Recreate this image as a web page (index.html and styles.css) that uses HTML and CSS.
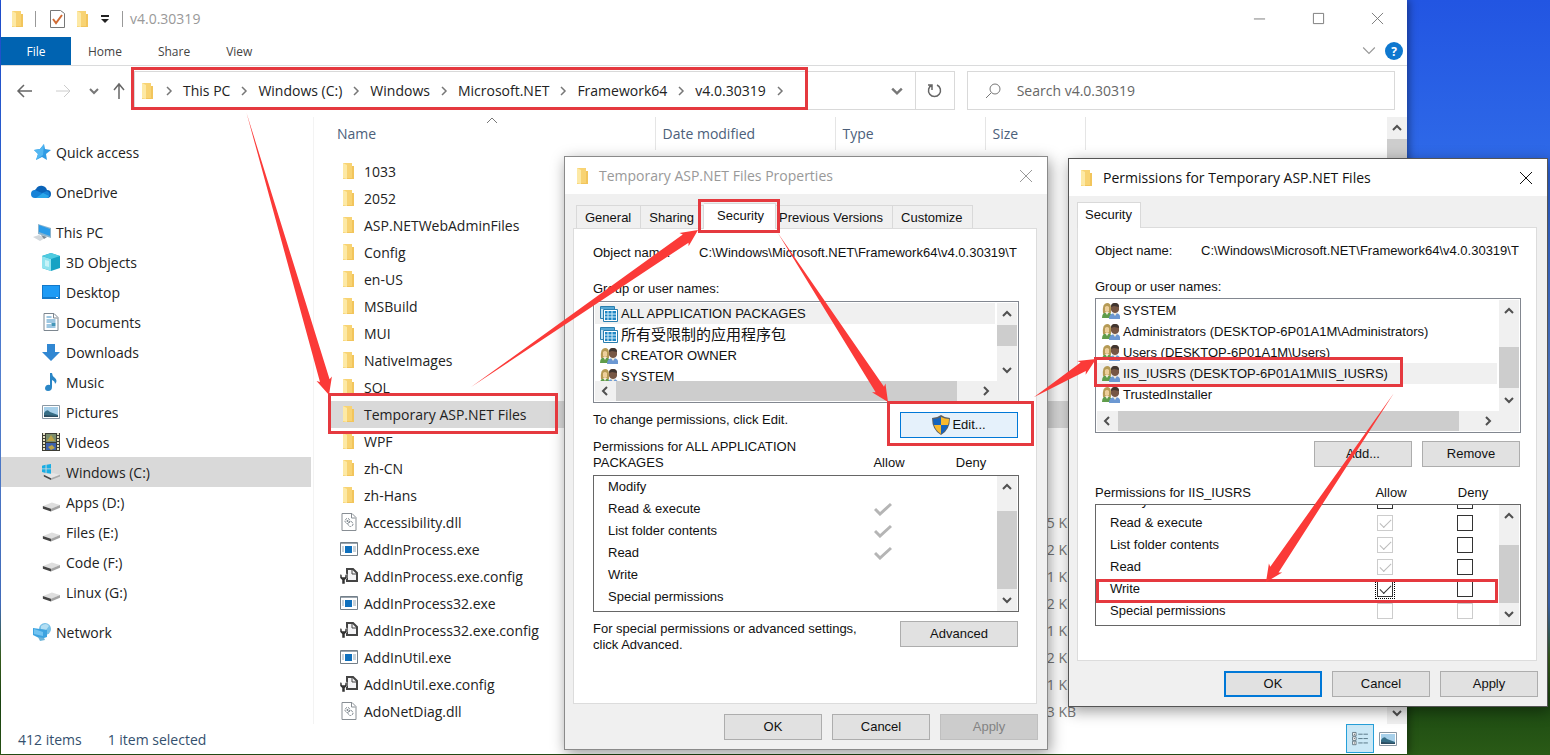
FILE: index.html
```html
<!DOCTYPE html>
<html lang="en"><head><meta charset="utf-8"><title>v4.0.30319</title><link rel="stylesheet" href="styles.css"></head>
<body class="desktop">
<svg class="sprite" aria-hidden="true">
<symbol id="folder" viewBox="0 0 16 18"><path d="M2 1h9v3h2v13H2z" fill="#f8d373"/><path d="M2 1l4 2v14l-4-1z" fill="#fde9a5"/><path d="M11 4h2v13H6v-1h5z" fill="#f2c55c"/></symbol>
<symbol id="star" viewBox="0 0 18 18"><path d="M11 1l1 5 6 1-5 4 1 6-5-3-6 3 2-6-4-4 6-1z" fill="#2f9be4"/><path d="M1 7l6-1 4-5-1 11-7 5 2-6z" fill="#53b7f2"/></symbol>
<symbol id="cloud" viewBox="0 0 20 14"><path d="M5 13a5 5 0 0 1 0-9 6 6 0 0 1 11 1 4 4 0 0 1 0 8z" fill="#0a63b8"/><path d="M4 13a4 4 0 0 1 0-8l7 3 5-2a4 4 0 0 1 1 7z" fill="#1683d8"/><path d="M5 13l7-5 6 3q-1 2-3 2z" fill="#2aa7ea"/></symbol>
<symbol id="pc" viewBox="0 0 18 18"><path d="M5 1l13 4v10L5 11z" fill="#8ab4cf"/><path d="M6 2l11 4v7L6 9z" fill="#2a9be8"/><path d="M0 14l6-2 6 3-5 3z" fill="#d3d8dc"/><path d="M8 12l6 2-3 2z" fill="#7b8a96"/></symbol>
<symbol id="cube" viewBox="0 0 18 18"><path d="M9 0l9 3v12l-9 3-9-3V3z" fill="#16a2c4"/><path d="M0 3l9 3v12l-9-3z" fill="#8fe3ef"/><path d="M9 0l9 3-9 3-9-3z" fill="#4fcbe0"/><path d="M3 7l4 1v6l-4-1z" fill="#c7f3f8"/></symbol>
<symbol id="screen" viewBox="0 0 18 14"><path d="M0 0h18v14H0z" fill="#1379ca"/><path d="M1 1h16v11H1z" fill="#1e9bf5"/><path d="M14 12h2v1h-2z" fill="#fff"/></symbol>
<symbol id="doc" viewBox="0 0 15 18"><path d="M.5.5h10l4 4v13H.5z" fill="#fff" stroke="#7d8790"/><path d="M10 1v4h4" fill="none" stroke="#7d8790"/><path d="M3 4h5M3 7h9M3 9h9M3 12h5M3 14h9" stroke="#3d8fc4"/><path d="M8 10h4v3H8z" fill="#4596b8"/></symbol>
<symbol id="down" viewBox="0 0 18 18"><path d="M5 1h8v8h5l-9 9-9-9h5z" fill="#3187d2"/></symbol>
<symbol id="note" viewBox="0 0 14 18"><path d="M6 0h2q0 3 3 5 3 3 0 6 0-3-3-4v7q0 4-4 4-3 0-3-3 1-4 5-3z" fill="#2a86c6"/></symbol>
<symbol id="photo" viewBox="0 0 18 14"><path d="M.5.5h17v13H.5z" fill="#fff" stroke="#8a98a4"/><path d="M2 2h14v10H2z" fill="#a7d0ea"/><path d="M2 8q3-5 6-1l8 3v2H2z" fill="#376e86"/><path d="M2 10l14 1v1H2z" fill="#2c4c60"/></symbol>
<symbol id="film" viewBox="0 0 18 18"><path d="M0 0h18v18H0z" fill="#3c3c34"/><path d="M2 0v18M16 0v18" stroke="#e6e3c7" stroke-width="2" stroke-dasharray="2 1"/><path d="M4 1h10v8H4z" fill="#7b8d6c"/><path d="M4 10h10v7H4z" fill="#3f62ad"/><path d="M9 2l4 6H5zM6 14l4-2 3 3-4 2z" fill="#bca445"/></symbol>
<symbol id="drive" viewBox="0 0 20 12"><path d="M1 6l10-4 9 3-10 4z" fill="#dedede"/><path d="M1 6l9 3v3L1 9z" fill="#444"/><path d="M10 9l10-4v3l-10 4z" fill="#a3a3a3"/></symbol>
<symbol id="windrive" viewBox="0 0 20 18"><path d="M2 12l10-2 8 2-10 4z" fill="#e6e6e6"/><path d="M2 12l8 4v2l-8-4z" fill="#444"/><path d="M10 16l10-4v2l-10 4z" fill="#aaa"/><path d="M0 2l4-1v4H0zM5 1l5-1v5H5zM0 6h4v4l-4-1zM5 6h5v5l-5-1z" fill="#18ade4"/></symbol>
<symbol id="network" viewBox="0 0 18 18"><circle cx="12" cy="6" r="6" fill="#75bfe6"/><path d="M8 3q5-4 8 0l-3 4-5-1z" fill="#b3def2"/><path d="M0 5l14 2v7l-6 2-8-4z" fill="#3da3e0"/><path d="M1 6l9 3v4L1 11z" fill="#71c3f1"/><path d="M5 14l6 1 1 2-5 1z" fill="#6db4d8"/></symbol>
<symbol id="dll" viewBox="0 0 15 18"><path d="M.5.5h10l4 4v13H.5z" fill="#fff" stroke="#888e94"/><path d="M10 1v4h4" fill="none" stroke="#888e94"/><circle cx="6" cy="8" r="2.500" fill="none" stroke="#7c858c" stroke-dasharray="2 1"/><circle cx="6" cy="8" r="1" fill="#7c858c"/><circle cx="9" cy="11" r="2.500" fill="none" stroke="#7c858c" stroke-dasharray="2 1"/></symbol>
<symbol id="exe" viewBox="0 0 18 14"><path d="M.5.5h17v13H.5z" fill="#fff" stroke="#737f89"/><path d="M1 1h16v1H1z" fill="#9ba5ae"/><path d="M5 4h7v7H5z" fill="#0f70bd"/><path d="M2 5h2M2 7h2M2 9h2M13 5h3M13 7h3M13 9h3" stroke="#92a6b4"/></symbol>
<symbol id="config" viewBox="0 0 18 18"><path d="M7 14V2h6l4 4v8z" fill="#f4f4f6" stroke="#444" stroke-width="2"/><path d="M12 2v5h5" fill="none" stroke="#444"/><path d="M0 7v4l2 2v4h3v-4l2-2V7l-2 1v2H2V8z" fill="#333" stroke="#fff" stroke-width=".5"/></symbol>
<symbol id="people" viewBox="0 0 18 16"><path d="M0 15q0-6 5-6t5 6z" fill="#5f9c4a"/><path d="M1 10Q0 0 5 0q4 0 4 5v5z" fill="#b59a55"/><path d="M3 4q2-2 4 0v4q-2 2-4 0z" fill="#edcf9b"/><path d="M7 16q0-6 6-6t5 6z" fill="#6c98d2"/><path d="M9 4q0-4 4-4t4 4v3q-1 3-4 3T9 7z" fill="#775744"/><path d="M9 4q0-4 4-4t4 4l-5-1z" fill="#40352f"/><path d="M3 9l2 3 2-3zM11 10l2 3 2-3z" fill="#f2ead8"/></symbol>
<symbol id="apps" viewBox="0 0 18 16"><path d="M.5.5h14v12H.5z" fill="#c3e2f4" stroke="#2a7eae"/><path d="M1 1h13v2H1z" fill="#56a8d5"/><path d="M3.500 3.500h14v12h-14z" fill="#fff" stroke="#2a7eae"/><path d="M5 5h11v9H5z" fill="#1f86c4"/><path d="M8 5v9M12 5v9M5 8h11M5 11h11" stroke="#d4effc"/></symbol>
<symbol id="shield" viewBox="0 0 18 20"><path d="M9 0q4 3 9 3 0 12-9 17Q0 15 0 3q5 0 9-3z" fill="#5d6063"/><path d="M9 2v8H2Q1 7 1 4q5 0 8-2zM9 10h7q-2 6-7 9z" fill="#1563bd"/><path d="M9 2q4 2 8 2 0 3-1 6H9zM2 10h7v9q-5-3-7-9z" fill="#f9b92d"/></symbol>
<symbol id="chev" viewBox="0 0 10 10"><path d="M1 3l4 4 4-4" fill="none" stroke="currentColor" stroke-width="2"/></symbol>
<symbol id="crumb" viewBox="0 0 10 10"><path d="M3 1l4 4-4 4" fill="none" stroke="currentColor" stroke-width="1.500"/></symbol>
<symbol id="thin" viewBox="0 0 12 12"><path d="M1 3l5 5 5-5" fill="none" stroke="currentColor"/></symbol>
<symbol id="close" viewBox="0 0 14 14"><path d="M1 1l12 12M13 1L1 13" fill="none" stroke="currentColor"/></symbol>
<symbol id="tick" viewBox="0 0 18 14"><path d="M1 7l5 5L17 2" fill="none" stroke="#b5b5b5" stroke-width="3"/></symbol>
</svg>

<main class="explorer">
<header class="titlebar">
<svg class="i-folder"><use href="#folder"/></svg><span class="bar"></span>
<svg class="i-prop" viewBox="0 0 15 18"><path d="M.5.500h10l4 3v14H.5z" fill="#fff" stroke="#777"/><path d="M3 9l3 4 6-8" fill="none" stroke="#d16b34" stroke-width="2"/></svg>
<svg class="i-folder"><use href="#folder"/></svg>
<svg class="i-more" viewBox="0 0 8 8"><path d="M0 0h8v2H0zM0 4h8L4 8z" fill="#222"/></svg><span class="bar near"></span><span class="wtitle">v4.0.30319</span>
<span class="winctl"><button aria-label="Minimize"><svg viewBox="0 0 14 14"><path d="M1 7.500h12" stroke="#777"/></svg></button><button aria-label="Maximize"><svg viewBox="0 0 14 14"><path d="M1.500 1.500h11v11h-11z" fill="none" stroke="#777"/></svg></button><button aria-label="Close"><svg><use href="#close"/></svg></button></span>
</header>
<nav class="ribbon"><button class="file">File</button><button>Home</button><button>Share</button><button>View</button><svg class="expand"><use href="#thin"/></svg><button class="help" aria-label="Help">?</button></nav>
<div class="navrow">
<div class="arrows"><svg viewBox="0 0 16 16"><path d="M15 8H1M7 2L1 8l6 6" fill="none" stroke="#666" stroke-width="1.500"/></svg><svg viewBox="0 0 16 16"><path d="M1 8h14M9 2l6 6-6 6" fill="none" stroke="#ccc" stroke-width="1"/></svg><svg class="small"><use href="#chev"/></svg><svg viewBox="0 0 16 16"><path d="M8 16V1M3 7l5-6 5 6" fill="none" stroke="#666" stroke-width="1.500"/></svg></div>
<div class="address"><svg class="i-folder"><use href="#folder"/></svg>
<svg class="sep"><use href="#crumb"/></svg><a href="#">This PC</a><svg class="sep"><use href="#crumb"/></svg><a href="#">Windows (C:)</a><svg class="sep"><use href="#crumb"/></svg><a href="#">Windows</a><svg class="sep"><use href="#crumb"/></svg><a href="#">Microsoft.NET</a><svg class="sep"><use href="#crumb"/></svg><a href="#">Framework64</a><svg class="sep"><use href="#crumb"/></svg><a href="#">v4.0.30319</a><svg class="sep"><use href="#crumb"/></svg>
<svg class="drop"><use href="#chev"/></svg><button class="refresh" aria-label="Refresh"><svg viewBox="0 0 16 16"><path d="M10 2a6 6 0 1 1-5 0M5 7V2H1" fill="none" stroke="#666" stroke-width="1.500"/></svg></button></div>
<label class="search"><svg viewBox="0 0 16 16"><circle cx="10" cy="6" r="5" fill="none" stroke="#777"/><path d="M6 10l-5 5" stroke="#777"/></svg><input type="search" placeholder="Search v4.0.30319" aria-label="Search"></label>
</div>
<div class="content">
<aside class="tree">
<a href="#"><svg><use href="#star"/></svg>Quick access</a>
<a href="#" class="gap"><svg class="wide"><use href="#cloud"/></svg>OneDrive</a>
<a href="#" class="gap"><svg><use href="#pc"/></svg>This PC</a>
<a href="#" class="sub"><svg><use href="#cube"/></svg>3D Objects</a>
<a href="#" class="sub"><svg><use href="#screen"/></svg>Desktop</a>
<a href="#" class="sub"><svg><use href="#doc"/></svg>Documents</a>
<a href="#" class="sub"><svg><use href="#down"/></svg>Downloads</a>
<a href="#" class="sub"><svg><use href="#note"/></svg>Music</a>
<a href="#" class="sub"><svg><use href="#photo"/></svg>Pictures</a>
<a href="#" class="sub"><svg><use href="#film"/></svg>Videos</a>
<a href="#" class="sub on"><svg><use href="#windrive"/></svg>Windows (C:)</a>
<a href="#" class="sub"><svg class="low"><use href="#drive"/></svg>Apps (D:)</a>
<a href="#" class="sub"><svg class="low"><use href="#drive"/></svg>Files (E:)</a>
<a href="#" class="sub"><svg class="low"><use href="#drive"/></svg>Code (F:)</a>
<a href="#" class="sub"><svg class="low"><use href="#drive"/></svg>Linux (G:)</a>
<a href="#" class="gap"><svg><use href="#network"/></svg>Network</a>
</aside>
<section class="listing">
<table class="files">
<colgroup><col class="c-name"><col class="c-date"><col class="c-type"><col class="c-size"><col></colgroup>
<thead><tr><th>Name<svg class="sort"><use href="#thin"/></svg></th><th>Date modified</th><th>Type</th><th>Size</th><th></th></tr></thead>
<tbody>
<tr><td><svg><use href="#folder"/></svg>1033</td><td></td><td></td><td></td><td></td></tr>
<tr><td><svg><use href="#folder"/></svg>2052</td><td></td><td></td><td></td><td></td></tr>
<tr><td><svg><use href="#folder"/></svg>ASP.NETWebAdminFiles</td><td></td><td></td><td></td><td></td></tr>
<tr><td><svg><use href="#folder"/></svg>Config</td><td></td><td></td><td></td><td></td></tr>
<tr><td><svg><use href="#folder"/></svg>en-US</td><td></td><td></td><td></td><td></td></tr>
<tr><td><svg><use href="#folder"/></svg>MSBuild</td><td></td><td></td><td></td><td></td></tr>
<tr><td><svg><use href="#folder"/></svg>MUI</td><td></td><td></td><td></td><td></td></tr>
<tr><td><svg><use href="#folder"/></svg>NativeImages</td><td></td><td></td><td></td><td></td></tr>
<tr><td><svg><use href="#folder"/></svg>SQL</td><td></td><td></td><td></td><td></td></tr>
<tr class="on"><td><svg><use href="#folder"/></svg>Temporary ASP.NET Files</td><td></td><td></td><td></td><td></td></tr>
<tr><td><svg><use href="#folder"/></svg>WPF</td><td></td><td></td><td></td><td></td></tr>
<tr><td><svg><use href="#folder"/></svg>zh-CN</td><td></td><td></td><td></td><td></td></tr>
<tr><td><svg><use href="#folder"/></svg>zh-Hans</td><td></td><td></td><td></td><td></td></tr>
<tr><td><svg><use href="#dll"/></svg>Accessibility.dll</td><td></td><td></td><td>5 KB</td><td></td></tr>
<tr><td><svg><use href="#exe"/></svg>AddInProcess.exe</td><td></td><td></td><td>2 KB</td><td></td></tr>
<tr><td><svg><use href="#config"/></svg>AddInProcess.exe.config</td><td></td><td></td><td>1 KB</td><td></td></tr>
<tr><td><svg><use href="#exe"/></svg>AddInProcess32.exe</td><td></td><td></td><td>2 KB</td><td></td></tr>
<tr><td><svg><use href="#config"/></svg>AddInProcess32.exe.config</td><td></td><td></td><td>1 KB</td><td></td></tr>
<tr><td><svg><use href="#exe"/></svg>AddInUtil.exe</td><td></td><td></td><td>2 KB</td><td></td></tr>
<tr><td><svg><use href="#config"/></svg>AddInUtil.exe.config</td><td></td><td></td><td>1 KB</td><td></td></tr>
<tr><td><svg><use href="#dll"/></svg>AdoNetDiag.dll</td><td></td><td></td><td>3 KB</td><td></td></tr>
</tbody></table>
</section>
<div class="vscroll main"><svg class="up"><use href="#chev"/></svg><i></i><svg><use href="#chev"/></svg></div>
</div>
<footer class="status"><span>412 items</span><span>1 item selected</span><span class="views"><button class="on" aria-label="Details"><svg viewBox="0 0 18 16"><path d="M.5.500h4v4h-4zM.5 5.500h4v4h-4zM.5 10.500h4v4h-4z" fill="#fff" stroke="#5c6f7a"/><path d="M2 2h1v1H2zM2 7h1v1H2zM2 12h1v1H2z" fill="#222"/><path d="M7 2.500h5M13 2.500h5M7 7.500h5M13 7.500h5M7 12.500h5M13 12.500h5" stroke="#4d6b7a"/></svg></button><button aria-label="Large icons"><svg><use href="#photo"/></svg></button></span></footer>
</main>

<section class="dialog props" role="dialog" aria-label="Temporary ASP.NET Files Properties">
<header><svg class="i-folder"><use href="#folder"/></svg><h2>Temporary ASP.NET Files Properties</h2><button aria-label="Close"><svg><use href="#close"/></svg></button></header>
<div class="tabs"><button>General</button><button>Sharing</button><button class="on">Security</button><button>Previous Versions</button><button>Customize</button></div>
<div class="panel">
<p class="object"><span>Object name:</span><span class="path">C:\Windows\Microsoft.NET\Framework64\v4.0.30319\T</span></p>
<p class="group">Group or user names:</p>
<div class="listbox short"><div class="row"><ul><li class="on"><svg><use href="#apps"/></svg>ALL APPLICATION PACKAGES</li><li class="cjk"><svg><use href="#apps"/></svg>所有受限制的应用程序包</li><li><svg><use href="#people"/></svg>CREATOR OWNER</li><li><svg><use href="#people"/></svg>SYSTEM</li></ul><div class="vscroll"><svg class="up"><use href="#chev"/></svg><i class="t-short"></i><svg><use href="#chev"/></svg></div></div>
<div class="hscroll"><svg class="left"><use href="#chev"/></svg><i></i><svg class="right"><use href="#chev"/></svg></div></div>
<div class="editrow"><span>To change permissions, click Edit.</span><button class="btn edit"><svg><use href="#shield"/></svg>Edit...</button></div>
<div class="phead"><span>Permissions for ALL APPLICATION PACKAGES</span><b>Allow</b><b>Deny</b></div>
<div class="permbox"><table><tr><td>Modify</td><td></td><td></td></tr><tr><td>Read &amp; execute</td><td><svg class="tick"><use href="#tick"/></svg></td><td></td></tr><tr><td>List folder contents</td><td><svg class="tick"><use href="#tick"/></svg></td><td></td></tr><tr><td>Read</td><td><svg class="tick"><use href="#tick"/></svg></td><td></td></tr><tr><td>Write</td><td></td><td></td></tr><tr><td>Special permissions</td><td></td><td></td></tr></table><div class="vscroll"><svg class="up"><use href="#chev"/></svg><i class="t-perm"></i><svg><use href="#chev"/></svg></div></div>
<div class="advrow"><span>For special permissions or advanced settings, click Advanced.</span><button class="btn">Advanced</button></div>
</div>
<div class="buttons"><button class="btn">OK</button><button class="btn">Cancel</button><button class="btn" disabled>Apply</button></div>
</section>

<section class="dialog perms" role="dialog" aria-label="Permissions for Temporary ASP.NET Files">
<header><svg class="i-folder"><use href="#folder"/></svg><h2>Permissions for Temporary ASP.NET Files</h2><button aria-label="Close"><svg><use href="#close"/></svg></button></header>
<div class="tabs"><button class="on">Security</button></div>
<div class="panel">
<p class="object"><span>Object name:</span><span class="path">C:\Windows\Microsoft.NET\Framework64\v4.0.30319\T</span></p>
<p class="group">Group or user names:</p>
<div class="listbox tall"><div class="row"><ul><li><svg><use href="#people"/></svg>SYSTEM</li><li><svg><use href="#people"/></svg>Administrators (DESKTOP-6P01A1M\Administrators)</li><li><svg><use href="#people"/></svg>Users (DESKTOP-6P01A1M\Users)</li><li class="on"><svg><use href="#people"/></svg>IIS_IUSRS (DESKTOP-6P01A1M\IIS_IUSRS)</li><li><svg><use href="#people"/></svg>TrustedInstaller</li></ul><div class="vscroll"><svg class="up"><use href="#chev"/></svg><i class="t-tall"></i><svg><use href="#chev"/></svg></div></div>
<div class="hscroll"><svg class="left"><use href="#chev"/></svg><i></i><svg class="right"><use href="#chev"/></svg></div></div>
<div class="addrow"><button class="btn">Add...</button><button class="btn">Remove</button></div>
<div class="phead one"><span>Permissions for IIS_IUSRS</span><b>Allow</b><b>Deny</b></div>
<div class="permbox scrolled"><table><tr><td>Modify</td><td><input type="checkbox" aria-label="Allow Modify"></td><td><input type="checkbox" aria-label="Deny Modify"></td></tr><tr><td>Read &amp; execute</td><td><input type="checkbox" checked disabled aria-label="Allow Read and execute"></td><td><input type="checkbox" aria-label="Deny Read and execute"></td></tr><tr><td>List folder contents</td><td><input type="checkbox" checked disabled aria-label="Allow List folder contents"></td><td><input type="checkbox" aria-label="Deny List folder contents"></td></tr><tr><td>Read</td><td><input type="checkbox" checked disabled aria-label="Allow Read"></td><td><input type="checkbox" aria-label="Deny Read"></td></tr><tr><td>Write</td><td><input type="checkbox" checked class="focus" aria-label="Allow Write"></td><td><input type="checkbox" aria-label="Deny Write"></td></tr><tr><td>Special permissions</td><td><input type="checkbox" disabled aria-label="Allow Special permissions"></td><td><input type="checkbox" disabled aria-label="Deny Special permissions"></td></tr></table><div class="vscroll"><svg class="up"><use href="#chev"/></svg><i class="t-perm2"></i><svg><use href="#chev"/></svg></div></div>
</div>
<div class="buttons"><button class="btn default">OK</button><button class="btn">Cancel</button><button class="btn">Apply</button></div>
</section>

<svg class="marks" width="1550" height="755" aria-hidden="true"><g fill="none" stroke="#e5393f" stroke-width="3"><path d="M132.500 68.500h674v40h-674zM329.500 394.500h227v38h-227zM699.500 200.500h79v31h-79zM888.500 402.500h144v42h-144zM1095.500 358.500h306v27h-306zM1097.500 580.500h399v21h-399z"/></g>
<g fill="#fb3a38"><path transform="translate(329 395) rotate(73.700)" d="M-294 0L-15-5-17-8 0 0-17 8-15 5z"/><path transform="translate(698 230) rotate(-34.700)" d="M-276 0L-15-5-17-8 0 0-17 8-15 5z"/><path transform="translate(888 402) rotate(56.900)" d="M-202 0L-15-5-17-8 0 0-17 8-15 5z"/><path transform="translate(1096 359) rotate(-31.500)" d="M-73 0L-15-5-17-8 0 0-17 8-15 5z"/><path transform="translate(1266 582) rotate(124.100)" d="M-228 0L-15-5-17-8 0 0-17 8-15 5z"/></g></svg>
</body></html>
```
FILE: styles.css
```css
*{box-sizing:border-box}
body,p,h2,ul,table{margin:0;padding:0}
svg{display:block;flex:none;overflow:visible}
button{font:inherit;color:inherit;border:0;background:none;padding:0}
a{color:inherit;text-decoration:none}
.sprite{position:absolute;width:0;height:0}
.desktop{height:100vh;overflow:hidden;position:relative;background:linear-gradient(#2255e2 0,#2f6ae8 22%,#5d8fe8 50%,#4878d0 80%,#3c661f 87%,#1c4a12 93%,#2a5a16 100%);font-family:"Open Sans","Noto Sans",sans-serif;font-size:14px;color:#222}
.i-folder{width:16px;height:18px}
.explorer{display:flex;flex-direction:column;height:calc(100vh - 1px);margin:0 143px 0 1px;background:#fff;box-shadow:2px 0 8px #0006}
.titlebar{display:flex;align-items:center;height:37px;padding-left:9px;color:#999}
.bar{width:1px;height:16px;background:#999;margin:0 14px 0 9px}
.i-prop{width:15px;height:18px;margin-right:10px}
.i-more{width:8px;height:8px;margin-left:10px}
.bar.near{margin:0 7px 0 13px}
.winctl{display:flex;gap:46px;margin-left:auto;padding-right:23px;color:#777}
.winctl svg{width:13px;height:13px}
.ribbon{display:flex;align-items:center;height:29px;border-bottom:1px solid #dadbdc;font-size:12px;color:#444}
.ribbon button{margin-left:17px;margin-right:19px}
.ribbon .file{width:70px;height:28px;margin:0;background:#0063b1;color:#fff}
.ribbon .expand{width:14px;height:14px;margin-left:auto;color:#999}
.ribbon .help{width:18px;height:18px;margin:0 4px 0 9px;border-radius:50%;background:#0f78cf;color:#fff;font-weight:700}
.navrow{display:flex;align-items:center;height:49px}
.arrows{display:flex;align-items:center;gap:22px;width:133px;padding-left:16px;color:#777}
.arrows svg{width:16px;height:16px}
.arrows .small{width:10px;height:10px;margin-left:-4px}
.arrows svg:last-child{margin-left:-10px}
.address{display:flex;align-items:center;flex:813 1 0;height:39px;border:1px solid #d9d9d9;padding-left:5px}
.sep{width:10px;height:10px;margin:0 9px 0 9px;color:#777}
.address .i-folder{margin-right:-1px}
.drop{width:12px;height:12px;margin:0 12px 0 auto;color:#777}
.refresh{align-self:stretch;width:39px;border-left:1px solid #d9d9d9}
.refresh svg{width:16px;height:16px;margin:auto}
.search{display:flex;align-items:center;flex:409 1 0;height:39px;margin:0 12px;border:1px solid #d9d9d9;padding-left:17px}
.search svg{width:16px;height:16px}
.search input{flex:1;min-width:0;border:0;outline:0;margin-left:16px;font:inherit;padding:0}
.search input::placeholder{color:#666;opacity:1}
.content{display:flex;flex:1;min-height:0;padding-top:2px}
.tree{width:313px;border-right:1px solid #f3f3f3;padding-top:20px}
.tree a{display:flex;align-items:center;height:30px;padding-left:32px;gap:5px;margin-right:2px}
.tree svg{width:18px;height:18px}
.tree .wide{width:20px;margin-left:-2px}
.tree .gap{margin-top:10px}
.tree .sub{padding-left:41px;gap:6px}
.tree .on{background:#d9d9d9}
.tree .low{margin-top:8px}
.listing{flex:1;min-width:0;overflow:hidden;padding-left:16px}
.files{width:100%;table-layout:fixed;border-collapse:collapse}
.c-name{width:325px}.c-date{width:180px}.c-type{width:150px}.c-size{width:100px}
.files th{height:33px;padding:0 7px;border-right:1px solid #e5e5e5;text-align:left;font-weight:400;color:#4c607a;position:relative}
.files th:last-child{border:0}
.sort{position:absolute;left:156px;top:-3px;width:12px;height:12px;transform:scaleY(-1);color:#777}
.files tbody::before{content:"";display:block;height:8px}
.files td{height:27px;padding:0;white-space:nowrap}
.files td:first-child{padding-left:10px}
.files td svg{display:inline-block;width:18px;height:18px;margin-right:6px;vertical-align:-3px}
.files td:nth-child(4){text-align:right;padding-right:9px;color:#777}
.files .on td{background:#d9d9d9}
.vscroll{display:flex;flex-direction:column;align-items:center;justify-content:space-between;width:20px;background:#f0f0f0;color:#505050;padding:6px 0}
.vscroll svg{width:10px;height:10px}
.vscroll .up{transform:rotate(180deg)}
.vscroll i{width:20px;background:#cdcdcd}
.vscroll.main i{height:200px;margin-bottom:auto;margin-top:6px}
.status{display:flex;align-items:center;height:30px;padding-left:17px;gap:26px;color:#34506e}
.views{display:flex;margin-left:auto;align-self:stretch;padding-right:5px}
.views button{width:28px;height:29px;display:grid;place-items:center}
.views svg{width:18px;height:14px}
.views .on{background:#cbe8f6;border:1px solid #26a0da}
.dialog{position:absolute;display:flex;flex-direction:column;background:#f0f0f0;border:1px solid #8a8a8a;font-family:"Liberation Sans","Noto Sans CJK SC",sans-serif;font-size:13px;color:#111;box-shadow:2px 4px 14px #0006}
.props{left:564px;top:156px;width:484px}
.perms{left:1068px;top:158px;width:480px;border-color:#555}
.dialog header{display:flex;align-items:center;height:37px;background:#fff;padding:0 14px 0 10px;gap:8px;font-family:"Open Sans","Noto Sans",sans-serif}
.dialog h2{font-size:14px;font-weight:400;flex:1}
.dialog header svg{width:16px;height:18px}
.dialog header button svg{width:14px;height:14px}
.props header{color:#999}
.tabs{display:flex;align-items:flex-end;padding:0 0 0 8px;height:34px}
.tabs button{height:23px;border:1px solid #d9d9d9;border-bottom:0;border-left:0;background:#f0f0f0;padding:0 9px 0 8px}
.tabs button:first-child{border-left:1px solid #d9d9d9}
.tabs .on{height:26px;background:#fff;margin-bottom:-1px;position:relative;padding-bottom:2px}
.props .tabs{padding-left:11px}
.props .tabs .on{padding:0 11px 2px 13px}
.props .tabs .on + button{padding-left:3px}
.perms .tabs{height:31px}
.perms .tabs .on{padding:0 8px 2px 7px}
.panel{border:1px solid #dcdcdc;background:#fff;margin:0 10px 0 8px;padding:16px 17px 0 19px;line-height:16px}
.perms .panel{padding:15px 15px 34px 17px}
.object{display:flex;height:16px}
.object span:first-child{flex:0 0 106px}
.path{white-space:nowrap;overflow:hidden;flex:0 1 321px}
.group{margin-top:20px}
.listbox{border:1px solid #828790;margin-top:4px;padding:1px;display:flex;flex-direction:column}
.perms .listbox{margin-top:3px}
.short{height:102px}.tall{height:135px}
.listbox .row{display:flex;flex:1;min-height:0;overflow:hidden;gap:2px}
.listbox ul{flex:1;list-style:none;overflow:hidden}
.listbox li{display:flex;align-items:center;height:21px;padding-left:5px;gap:3px;white-space:nowrap}
.listbox .cjk{font-size:15px}
.listbox li svg{width:18px;height:16px}
.listbox .on{background:#f0f0f0}
.hscroll{display:flex;align-items:center;height:20px;background:#f0f0f0;padding:0 26px 0 5px;color:#505050}
.hscroll svg{width:10px;height:10px}
.hscroll .left{transform:rotate(90deg)}.hscroll .right{transform:rotate(-90deg);margin-left:auto}
.hscroll i{width:341px;height:20px;background:#cdcdcd;margin-left:6px}
.t-short{height:21px}.t-tall{height:41px}.t-perm{height:78px}.t-perm2{height:58px}
.row .t-short{margin-bottom:auto;margin-top:6px}
.row .t-tall{margin-top:auto;margin-bottom:7px}
.permbox i{margin-top:auto;margin-bottom:6px}
.btn{width:98px;height:26px;border:1px solid #adadad;background:#e1e1e1;line-height:16px}
.editrow,.advrow{display:flex;justify-content:space-between;padding-right:1px}
.editrow{margin-top:9px;height:26px}
.advrow{margin-top:9px;height:82px}
.advrow span{width:290px}
.editrow .btn,.advrow .btn{width:118px}
.editrow .edit{display:flex;align-items:center;justify-content:center;gap:2px;background:#e5f1fb;border-color:#0078d7}
.edit svg{width:18px;height:20px}
.phead{display:flex;align-items:flex-end;height:32px;margin-top:1px}
.phead span{flex:1;padding-right:40px}
.phead b{font-weight:400;width:82px;text-align:center}
.phead b:last-child{margin-right:7px}
.permbox{display:flex;justify-content:space-between;align-items:flex-start;border:1px solid #666;margin-top:4px;height:137px;padding-right:1px;overflow:hidden}
.permbox .vscroll{align-self:stretch;flex:none}
.permbox table{border-spacing:0}
.permbox td{height:22px;padding:0}
.permbox td:first-child{width:249px;padding-left:14px}
.permbox td:nth-child(2){width:80px}
.permbox td:nth-child(3){width:74px;padding-left:6px}
.tick{width:18px;height:14px;margin:auto}
.scrolled{height:122px;margin-top:3px}
.scrolled table{margin-top:-15px}
.permbox input{appearance:none;display:block;width:16px;height:16px;margin:0 auto;border:1px solid #333;background:#fff}
.permbox input:disabled{border-color:#ccc}
.permbox input:checked::after{content:"";display:block;width:10px;height:5px;margin:3px 0 0 2px;border:solid #333;border-width:0 0 1px 1px;transform:rotate(-45deg)}
.permbox input:disabled:checked::after{border-color:#bbb}
.permbox .focus{outline:1px dotted #000;outline-offset:1px}
.addrow{display:flex;justify-content:flex-end;gap:10px;margin-top:8px;padding-right:1px}
.phead.one{height:16px;margin-top:18px}
.buttons{display:flex;justify-content:flex-end;gap:10px;padding:10px 9px 9px}
.buttons .btn:disabled{background:#ccc;border-color:#bfbfbf;color:#838383}
.default{border:2px solid #0078d7}
.marks{position:absolute;left:0;top:0;pointer-events:none}
```
